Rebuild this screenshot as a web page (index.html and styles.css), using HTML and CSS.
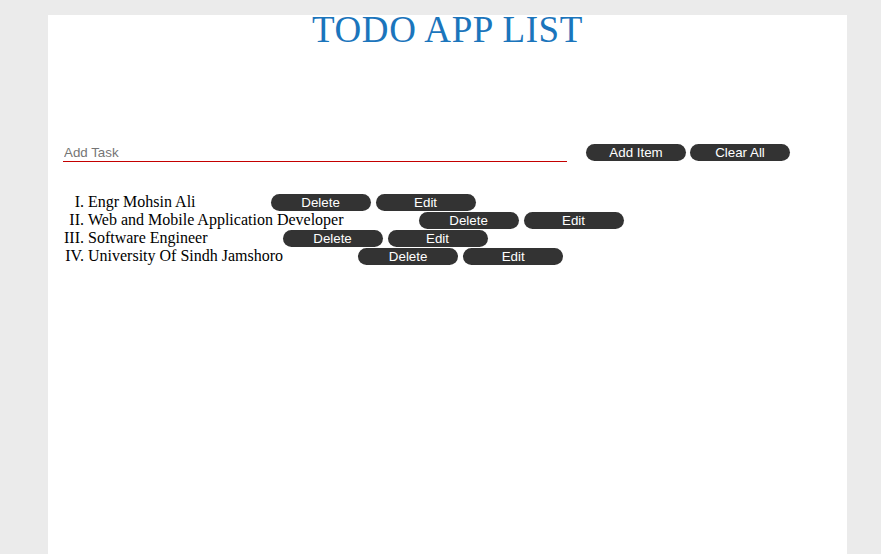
FILE: index.html
```html
<!DOCTYPE html>
<html>
<head>
<meta charset="utf-8">
<title>Todo App</title>
<link rel="stylesheet" href="styles.css">
</head>
<body>
<div class="container">
  <h1 class="title">TODO APP LIST</h1>
  <div class="form">
    <input class="task-input" type="text" placeholder="Add Task">
    <button class="btn btn-add">Add Item</button>
    <button class="btn btn-clear">Clear All</button>
  </div>
  <ol class="list">
    <li class="item"><span class="item-text">Engr Mohsin Ali</span><button class="btn btn-del">Delete</button><button class="btn btn-edit">Edit</button></li>
    <li class="item"><span class="item-text">Web and Mobile Application Developer</span><button class="btn btn-del">Delete</button><button class="btn btn-edit">Edit</button></li>
    <li class="item"><span class="item-text">Software Engineer</span><button class="btn btn-del">Delete</button><button class="btn btn-edit">Edit</button></li>
    <li class="item"><span class="item-text">University Of Sindh Jamshoro</span><button class="btn btn-del">Delete</button><button class="btn btn-edit">Edit</button></li>
  </ol>
</div>
</body>
</html>
```

FILE: styles.css
```css
html, body {
  margin: 0;
  padding: 0;
  background: #ebebeb;
}

.container {
  display: flow-root;
  margin: 15px 0 0 48px;
  width: 799px;
  min-height: 539px;
  background: #ffffff;
  font-family: "Liberation Serif", "Times New Roman", serif;
  font-size: 16px;
}

.title {
  margin: -6px 0 0;
  text-align: center;
  font-family: "Liberation Serif", "Times New Roman", serif;
  font-weight: normal;
  font-size: 37px;
  line-height: 42px;
  color: #1b75bc;
  letter-spacing: 0.6px;
}

.form {
  display: flex;
  align-items: flex-start;
  margin-top: 93px;
  padding-left: 15px;
}

.task-input {
  box-sizing: border-box;
  width: 504px;
  height: 18px;
  margin: 0;
  padding: 0 1px 1px;
  border: none;
  border-bottom: 1px solid #c40000;
  outline: none;
  background: #ffffff;
  font-family: "Liberation Sans", Arial, sans-serif;
  font-size: 13.333px;
}

.task-input::placeholder {
  color: #757575;
}

.btn {
  box-sizing: border-box;
  width: 100px;
  height: 17px;
  margin: 0;
  padding: 0 6px;
  border: none;
  border-radius: 9px;
  background: #333333;
  color: #ffffff;
  font-family: "Liberation Sans", Arial, sans-serif;
  font-size: 13.333px;
  line-height: 17px;
  vertical-align: baseline;
}

.btn-add {
  margin-left: 19px;
}

.btn-clear {
  margin-left: 4px;
}

.list {
  margin: 31px 0 0;
  padding-left: 40px;
  list-style-type: upper-roman;
}

.item {
  line-height: 18px;
  height: 18px;
}

.btn-del {
  margin-left: 75px;
}

.btn-edit {
  margin-left: 5px;
}
```
